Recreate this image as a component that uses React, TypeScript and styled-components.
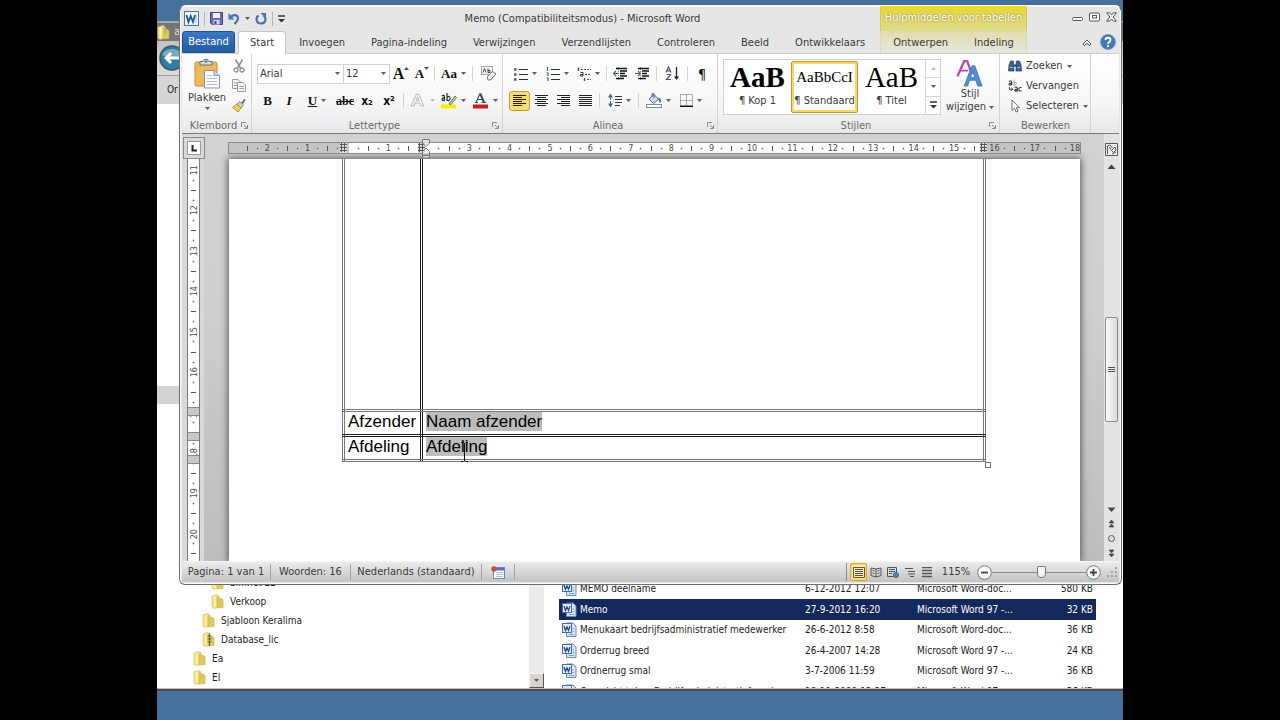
import React from "react";
import styled, { createGlobalStyle, css } from "styled-components";

const UI = `"DejaVu Sans Condensed", "DejaVu Sans", sans-serif`;

const Global = createGlobalStyle`
  * { box-sizing: border-box; }
  html, body { margin: 0; background: #000; }
  body { font: 11px/14px ${UI}; color: #3a3a3a; }
  button, select { font: inherit; color: inherit; }
  button { border: 0; padding: 0; margin: 0; background: none; }
  svg { display: block; flex: none; }
`;

/* ---------- desktop ---------- */

const Screen = styled.div`
  min-height: 100vh;
  padding: 0 157px;
  background: #000;
  display: flex;
`;

const Desktop = styled.main`
  position: relative;
  flex: 1;
  min-width: 0;
  background: #466f9b;
  padding: 21px 0 29px;
  display: flex;
  overflow: hidden;
`;

/* ---------- explorer window ---------- */

const Explorer = styled.section`
  flex: 1;
  min-width: 0;
  display: flex;
  flex-direction: column;
  background: #fff;
  border-bottom: 2px solid #4c4c4c;
  color: #1c1c1c;
  font-size: 10px;
`;

const ExplorerTitle = styled.div`
  height: 20px;
  display: flex;
  align-items: center;
  gap: 3px;
  background: #767676;
  border-top: 2px solid #a9a9a9;
  color: #ddd;
  font-size: 11px;
`;

const ExplorerNav = styled.div`
  height: 35px;
  display: flex;
  align-items: center;
  padding-left: 2px;
  background: linear-gradient(#bfc3c6, #dcdcdc);
  border-bottom: 1px solid #9b9b9b;
`;

const ExplorerCommands = styled.div`
  height: 28px;
  padding-left: 10px;
  display: flex;
  align-items: center;
  background: #d6d6d6;
`;

const ExplorerBody = styled.div`
  flex: 1 1 0;
  min-height: 0;
  display: flex;
  overflow: hidden;
  border-bottom: 1px solid #c0c0c0;
`;

const TreePane = styled.nav`
  width: 372px;
  overflow: hidden;
`;

const TreeFocus = styled.div`
  margin-top: 282px;
  height: 18px;
  background: #d4d3d2;
`;

const TreeList = styled.ul`
  list-style: none;
  margin: 169px 0 0;
  padding: 0;
`;

const TreeItem = styled.li<{ $depth: number }>`
  height: 19px;
  padding-left: ${(p) => 36 + p.$depth * 9}px;
  display: flex;
  align-items: center;
  gap: 5px;
`;

const TreeScroll = styled.div`
  width: 15px;
  display: flex;
  flex-direction: column;
  justify-content: flex-end;
  background: #ecebea;
`;

const TreeScrollButton = styled.button`
  height: 15px;
  display: flex;
  align-items: center;
  justify-content: center;
  background: #d6d3ce;
  border: 1px solid #f4f4f4;
  border-right-color: #555;
  border-bottom-color: #555;
`;

const FilePane = styled.div`
  flex: 1;
  padding: 475px 27px 0 15px;
  overflow: hidden;
`;

const FileTable = styled.table`
  width: 100%;
  table-layout: fixed;
  border-collapse: collapse;
`;

const FileRow = styled.tr<{ $selected?: boolean }>`
  height: 20px;
  &:nth-child(even) { height: 21px; }
  ${(p) => p.$selected && css`background: #14285c; color: #fff;`}
`;

const FileCell = styled.td<{ $w?: number; $end?: boolean }>`
  width: ${(p) => (p.$w ? p.$w + "px" : "auto")};
  padding: 0 3px 0 0;
  white-space: nowrap;
  text-align: ${(p) => (p.$end ? "right" : "left")};
`;

const FileName = styled.div`
  display: flex;
  align-items: center;
  gap: 3px;
  padding-left: 3px;
`;

/* ---------- Word window ---------- */

const WordWindow = styled.section`
  position: absolute;
  top: 5px;
  right: 1px;
  bottom: 135px;
  left: 22px;
  display: flex;
  flex-direction: column;
  padding: 0 2px 2px;
  background: #e6e6e6;
  border: 1px solid #6e6e6e;
  border-top-color: #f8f8f8;
  border-radius: 7px 7px 6px 6px;
  box-shadow: inset 0 0 0 1px #fafafa;
  overflow: hidden;
`;

const TitleBar = styled.header`
  height: 25px;
  display: flex;
  align-items: center;
`;

const QuickAccess = styled.div`
  height: 24px;
  display: flex;
  align-items: center;
  gap: 5px;
  padding-left: 2px;
`;

const QuickButton = styled.button`
  display: flex;
  align-items: center;
  gap: 5px;
`;

const QuickDivider = styled.span`
  width: 1px;
  height: 14px;
  background: #b5b5b5;
`;

const WindowTitle = styled.h1`
  flex: 1;
  margin: 0;
  text-align: center;
  font: inherit;
`;

const ContextTitle = styled.div`
  width: 147px;
  align-self: stretch;
  display: flex;
  align-items: center;
  justify-content: center;
  border: 1px solid #d9c94a;
  border-width: 0 1px;
  border-top: 3px solid #f2dc1e;
  background: linear-gradient(#e3d447, #dfdb8d);
  color: #fffff2;
  text-shadow: 0 0 2px #77702a;
  white-space: nowrap;
  line-height: 12px;
  padding-bottom: 4px;
`;

const WindowControls = styled.div`
  width: 92px;
  display: flex;
  justify-content: flex-end;
  align-items: center;
  gap: 6px;
  padding: 0 2px 4px 0;
`;

const TabRow = styled.div`
  height: 23px;
  display: flex;
  border-bottom: 1px solid #cfcfcf;
`;

const Tabs = styled.div`
  flex: 1;
  display: flex;
`;

const Tab = styled.button<{ $active?: boolean }>`
  flex: none;
  height: 23px;
  padding: 0 13px;
  white-space: nowrap;
  border-radius: 3px 3px 0 0;
  ${(p) =>
    p.$active &&
    css`
      background: #fff;
      border: 1px solid #c6c6c6;
      border-bottom: 0;
      padding: 0 11px;
    `}
`;

const FileTab = styled.button`
  height: 22px;
  width: 53px;
  margin-right: 3px;
  background: linear-gradient(#3b78c4, #2459a2);
  border: 1px solid #234f8c;
  border-radius: 3px 3px 0 0;
  color: #fff;
`;

const ContextTabs = styled.div`
  width: 147px;
  display: flex;
  justify-content: center;
  border: 1px solid #dcd9b6;
  border-width: 0 1px;
  background: linear-gradient(#e0deae, #e6e6e0);
`;

const TabExtras = styled.div`
  width: 92px;
  display: flex;
  align-items: center;
  justify-content: flex-end;
  gap: 8px;
  padding-right: 3px;
`;

const Ribbon = styled.div`
  height: 80px;
  display: flex;
  background: linear-gradient(#fff, #f7f7f7 60%, #e6e7e8);
  border-bottom: 1px solid #7c7c7c;
`;

const Group = styled.section<{ $w: number; $pad?: number }>`
  width: ${(p) => p.$w}px;
  padding: 2px 0 0 ${(p) => p.$pad ?? 4}px;
  display: flex;
  flex-direction: column;
  border-right: 1px solid #d3d3d3;
`;

const GroupBody = styled.div`
  flex: 1;
  min-height: 0;
  display: flex;
`;

const GroupFooter = styled.div`
  height: 15px;
  display: flex;
  align-items: center;
  padding: 0 3px 0 0;
  color: #6b6b6b;
`;

const GroupLabel = styled.span`
  flex: 1;
  text-align: center;
`;

const ToolRows = styled.div`
  flex: 1;
  display: flex;
  flex-direction: column;
  gap: 6px;
  padding-top: 7px;
`;

const ToolRow = styled.div`
  height: 21px;
  display: flex;
  align-items: center;
`;

const Tool = styled.button<{ $w: number; $active?: boolean }>`
  width: ${(p) => p.$w}px;
  height: 20px;
  display: flex;
  align-items: center;
  justify-content: center;
  gap: 4px;
  color: #111;
  ${(p) =>
    p.$active &&
    css`
      background: #fbdc78;
      border: 1px solid #c29b3a;
      border-radius: 3px;
    `}
`;

const SizeTool = styled(Tool)`
  gap: 0;
  svg { align-self: flex-start; margin-top: 3px; }
`;

const Glyph = styled.span<{ $size?: number; $serif?: boolean; $italic?: boolean; $under?: boolean; $strike?: boolean; $light?: boolean }>`
  font-family: ${(p) => (p.$serif ? `"Liberation Serif", serif` : UI)};
  font-weight: ${(p) => (p.$light ? "normal" : "bold")};
  font-size: ${(p) => p.$size ?? 13}px;
  line-height: 16px;
  font-style: ${(p) => (p.$italic ? "italic" : "normal")};
  text-decoration: ${(p) => (p.$under ? "underline" : p.$strike ? "line-through" : "none")};
`;

const Divider = styled.span`
  width: 1px;
  height: 15px;
  margin: 0 3px;
  background: #d2d2d2;
`;

const Combo = styled.label<{ $w: number }>`
  position: relative;
  width: ${(p) => p.$w}px;
  height: 20px;
  display: flex;
  align-items: center;
  border: 1px solid #d0d0d0;
  margin-right: -1px;
  background: #fff;

  select {
    width: 100%;
    height: 18px;
    padding: 0 2px;
    border: 0;
    background: none;
    appearance: none;
  }
  svg {
    position: absolute;
    right: 3px;
    pointer-events: none;
  }
`;

const PasteButton = styled.button`
  width: 42px;
  display: flex;
  flex-direction: column;
  align-items: center;
  gap: 2px;
  padding-top: 2px;
`;

const SmallStack = styled.div`
  width: 22px;
  display: flex;
  flex-direction: column;
  align-items: center;
  gap: 6px;
  padding-top: 3px;
`;

const Gallery = styled.div`
  width: 218px;
  height: 56px;
  margin-top: 3px;
  display: flex;
  background: #fff;
  border: 1px solid #cfcfcf;
`;

const StyleTile = styled.button<{ $active?: boolean }>`
  width: 67px;
  height: 52px;
  margin-top: 1px;
  display: flex;
  flex-direction: column;
  align-items: center;
  justify-content: flex-end;
  padding-bottom: 4px;
  border: 1px solid transparent;
  border-radius: 2px;
  overflow: hidden;
  white-space: nowrap;
  ${(p) =>
    p.$active &&
    css`
      border-color: #c0963a;
      box-shadow: inset 0 0 0 2px #f8d765;
    `}
`;

const Sample = styled.span<{ $size: number; $bold?: boolean }>`
  height: 32px;
  font: ${(p) => (p.$bold ? "bold" : "normal")} ${(p) => p.$size}px/30px "Liberation Serif", serif;
  color: #000;
`;

const GalleryScroll = styled.div`
  flex: 1;
  display: flex;
  flex-direction: column;
  border-left: 1px solid #d6d6d6;

  button {
    flex: 1;
    display: flex;
    flex-direction: column;
    gap: 2px;
    align-items: center;
    justify-content: center;
  }
  button + button { border-top: 1px solid #d6d6d6; }
`;

const ChangeStyles = styled.button`
  flex: 1;
  display: flex;
  flex-direction: column;
  align-items: center;
  gap: 1px;
  padding-top: 4px;
  line-height: 12px;
`;

const Inline = styled.span`
  display: flex;
  align-items: center;
  gap: 3px;
`;

const EditList = styled.div`
  display: flex;
  flex-direction: column;
  padding-left: 4px;
`;

const EditButton = styled.button`
  height: 20px;
  display: flex;
  align-items: center;
  gap: 4px;
`;

/* ---------- document area ---------- */

const Workspace = styled.div`
  flex: 1;
  min-height: 0;
  display: flex;
  background: linear-gradient(#d2d2d2, #cfcfcf 40%, #bdbdbd);
`;

const LeftRail = styled.div`
  width: 22px;
  display: flex;
  flex-direction: column;
  align-items: flex-start;
  background: #d9d9d9;
`;

const TabCorner = styled.button`
  width: 22px;
  height: 22px;
  margin: 3px 0 0 1px;
  display: flex;
  align-items: center;
  justify-content: center;
  border: 1px solid #8c8c8c;
  background: #d9d9d9;
`;

const VerticalRuler = styled.div`
  position: relative;
  flex: 1;
  width: 13px;
  margin-left: 5px;
  padding-top: 6px;
  display: grid;
  grid-template-rows: repeat(9, 1fr) 32px;
  background: #fff;
  border: 1px solid #7a7a7a;
  border-width: 0 1px;
  overflow: hidden;
`;

const VerticalCell = styled.div`
  display: grid;
  grid-template-rows: repeat(4, 10px);
  align-content: space-between;
  justify-items: center;
  align-items: center;
  min-height: 0;
  font-size: 9px;
  line-height: 10px;
  color: #4c4c4c;
`;

const Rotated = styled.span`
  writing-mode: vertical-rl;
  rotate: 180deg;
`;

const RowMarker = styled.span<{ $bottom: number }>`
  position: absolute;
  left: 0;
  right: 0;
  bottom: ${(p) => p.$bottom}px;
  height: 9px;
  background: #c9c9c9;
  border: 1px solid #8a8a8a;
  border-width: 1px 0;
`;

const PageColumn = styled.div`
  flex: 1;
  min-width: 0;
  display: flex;
  flex-direction: column;
  padding: 8px 24px 0 25px;
  overflow: hidden;
`;

const HorizontalRuler = styled.div`
  position: relative;
  height: 12px;
  margin: 0 -1px 5px;
  padding-left: 13px;
  display: grid;
  grid-template-columns: repeat(20, 1fr) 30px;
  background: linear-gradient(90deg, #c4c4c4 120px, #fff 120px, #fff calc(100% - 100px), #c4c4c4 calc(100% - 100px));
  border: 1px solid #8a8a8a;
`;

const HorizontalCell = styled.div`
  display: grid;
  grid-template-columns: repeat(4, 10px);
  justify-content: space-between;
  justify-items: center;
  align-items: center;
  font-size: 9px;
  line-height: 10px;
  color: #4c4c4c;
`;

const Tick = styled.i<{ $vertical?: boolean }>`
  width: ${(p) => (p.$vertical ? 5 : 1)}px;
  height: ${(p) => (p.$vertical ? 1 : 5)}px;
  background: #555;
`;

const Dot = styled.i`
  width: 1px;
  height: 1px;
  background: #444;
  outline: 1px solid #bbb5;
`;

const RulerMark = styled.span<{ $left?: number; $right?: number }>`
  position: absolute;
  top: 0;
  ${(p) => (p.$left !== undefined ? `left: ${p.$left}px;` : `right: ${p.$right}px;`)}
`;

const Page = styled.article`
  flex: 1;
  min-height: 0;
  padding: 0 94px 0 113px;
  background: #fff;
  box-shadow: 0 0 7px 1px #555;
`;

const TableFrame = styled.div`
  position: relative;
`;

const MemoTable = styled.table`
  width: 100%;
  table-layout: fixed;
  border-collapse: collapse;
  font: 17px/20px "Liberation Sans", Arial, sans-serif;
  color: #000;

  td { border: 3px double #222; }
  td:first-child { border-left-color: #777; }
  td:last-child { border-right-color: #777; }
  tr:first-child td { border-top: 0; border-bottom-color: #777; }
  tr:nth-child(2) td { border-top-color: #777; }
  tr:last-child td { border-bottom-color: #777; }
`;

const MemoRow = styled.tr<{ $h: number }>`
  height: ${(p) => p.$h}px;
`;

const MemoCell = styled.td<{ $w?: number }>`
  width: ${(p) => (p.$w ? p.$w + "px" : "auto")};
  padding: 0 3px 1px;
  vertical-align: middle;
`;

const FormField = styled.mark`
  background: #bcbcbc;
  color: #000;
`;

const TextCursor = styled.span`
  position: absolute;
  left: 118px;
  bottom: 0;
`;

const TableHandle = styled.span`
  position: absolute;
  right: -5px;
  bottom: -6px;
  width: 6px;
  height: 6px;
  border: 1px solid #777;
  background: #fff;
`;

const ScrollRail = styled.div`
  width: 15px;
  padding-top: 5px;
  display: flex;
  flex-direction: column;
  align-items: center;
  background: #e3e3e3;
`;

const RailButton = styled.button<{ $h: number }>`
  width: 15px;
  height: ${(p) => p.$h}px;
  display: flex;
  align-items: center;
  justify-content: center;
`;

const ScrollTrack = styled.div`
  flex: 1;
  padding-top: 144px;
`;

const ScrollThumb = styled.div`
  width: 13px;
  height: 105px;
  display: flex;
  align-items: center;
  justify-content: center;
  border: 1px solid #8c8c8c;
  border-radius: 2px;
  background: linear-gradient(90deg, #fafafa, #dcdcdc);
`;

/* ---------- status bar ---------- */

const StatusBar = styled.footer`
  height: 21px;
  display: flex;
  align-items: center;
  background: linear-gradient(#ececec, #c3c3c3);
  border-top: 1px solid #f7f7f7;
`;

const StatusItem = styled.button<{ $w: number }>`
  width: ${(p) => p.$w}px;
  height: 16px;
  display: flex;
  align-items: center;
  justify-content: center;
  white-space: nowrap;
  border-right: 1px solid #a3a3a3;
`;

const StatusSpacer = styled.span`
  flex: 1;
  height: 18px;
  border-right: 1px solid #8f8f8f;
  margin-right: 3px;
`;

const ViewButton = styled.button<{ $active?: boolean }>`
  width: 17px;
  height: 18px;
  display: flex;
  align-items: center;
  justify-content: center;
  ${(p) =>
    p.$active &&
    css`
      background: #fbe9a8;
      border: 1px solid #d9ab35;
      box-shadow: inset 0 0 0 1px #f6d565;
      border-radius: 2px;
    `}
`;

const ZoomLevel = styled.button`
  width: 42px;
  text-align: center;
`;

const ZoomSlider = styled.input`
  width: 94px;
  height: 16px;
  margin: 0;
  appearance: none;
  background: linear-gradient(#8d8d8d, #8d8d8d) center / 100% 1px no-repeat;

  &::-webkit-slider-thumb {
    appearance: none;
    width: 9px;
    height: 12px;
    background: #f6f6f6;
    border: 1px solid #777;
    border-radius: 1px 1px 4px 4px;
  }
`;

/* ---------- drawings ---------- */

const Caret = ({ up, faint }: { up?: boolean; faint?: boolean }) => (
  <svg width="5" height="3" viewBox="0 0 5 3">
    <path d={up ? "M0 3L2.500 0L5 3Z" : "M0 0H5L2.500 3Z"} fill={faint ? "#bbb" : "#5c5c5c"} />
  </svg>
);

const Folder = ({ zip }: { zip?: boolean }) => (
  <svg width="14" height="15" viewBox="0 0 14 15">
    <path d="M1 2L6 .5L8 2V13L3 14.500L1 13Z" fill="#f3e588" stroke="#d6c468" strokeWidth=".7" />
    <path d="M6 2.500L8 3.500V9L9 8.500V4L12 5.500V13.500L6 14Z" fill="#dfca5c" stroke="#c9b452" strokeWidth=".7" />
    <path d="M4 2V13" stroke="#fff9cf" />
    {zip && <path d="M7.500 1V14M5.500 4H9.500M5.500 7H9.500M5.500 10H9.500" stroke="#67613f" />}
  </svg>
);

const DocIcon = () => (
  <svg width="15" height="16" viewBox="0 0 15 16">
    <path d="M4.500 1H11L14 4V14.500H4.500Z" fill="#d6e4f4" stroke="#6c89b4" />
    <path d="M7 12.500H12M10.500 7H12M10.500 9.500H12" stroke="#7fa0cc" />
    <rect x=".5" y="1.500" width="9" height="9" fill="#e8f0fa" stroke="#4a6ca6" />
    <path d="M2 4L3.500 8.500L5 5L6.500 8.500L8 4" fill="none" stroke="#23498f" strokeWidth="1.300" />
  </svg>
);

const WordLogo = () => (
  <svg width="15" height="15" viewBox="0 0 15 15">
    <rect x=".5" y=".5" width="14" height="14" fill="#eef4fb" stroke="#4878ad" />
    <path d="M12 3V12" stroke="#9fb9d8" />
    <path d="M2.500 4L4.500 11L6.700 5L9 11L11 4" fill="none" stroke="#215a9f" strokeWidth="1.800" />
  </svg>
);

const SaveIcon = () => (
  <svg width="13" height="13" viewBox="0 0 13 13">
    <path d="M.5 .5H12.500V12.500H2L.5 11Z" fill="#6b6fb4" stroke="#40448a" />
    <rect x="3" y="1" width="7" height="5" fill="#eef0fa" />
    <rect x="3.500" y="8" width="6" height="4.500" fill="#d5d8ee" />
    <rect x="4.500" y="9" width="2" height="3" fill="#40448a" />
  </svg>
);

const UndoIcon = () => (
  <svg width="12" height="13" viewBox="0 0 12 13">
    <path d="M2.500 5.500C5 2 10 2.500 10 6.500C10 9 8 10.500 6.500 12" fill="none" stroke="#4674b4" strokeWidth="2.200" />
    <path d="M.5 1V7.500H6.500Z" fill="#4674b4" />
  </svg>
);

const RedoIcon = () => (
  <svg width="12" height="13" viewBox="0 0 12 13">
    <path d="M3.500 3.500C0 6 1.500 11.500 6 11.500C10.500 11.500 12 6.500 8.500 3.500" fill="none" stroke="#4674b4" strokeWidth="2.200" />
    <path d="M5.500 1H11V6.500Z" fill="#4674b4" />
  </svg>
);

const MoreIcon = () => (
  <svg width="7" height="8" viewBox="0 0 7 8">
    <path d="M0 1H7" stroke="#333" strokeWidth="1.300" />
    <path d="M0 4H7L3.500 7.500Z" fill="#333" />
  </svg>
);

const LauncherIcon = () => (
  <svg width="7" height="7" viewBox="0 0 7 7" fill="none" stroke="#8b8b8b">
    <path d="M.5 5V.5H5M3 3L6 6M6.500 3V6.500H3" />
  </svg>
);

const PasteIcon = () => (
  <svg width="27" height="31" viewBox="0 0 27 31">
    <rect x="1" y="4" width="22" height="24" rx="1.500" fill="#ecb95b" stroke="#c78f35" />
    <path d="M6 7V3.500H9C9 .5 15 .5 15 3.500H18V7Z" fill="#d9dde2" stroke="#64707e" />
    <rect x="10.500" y="2.500" width="3" height="2" fill="#64707e" />
    <path d="M10.500 12.500H20L25.500 17.500V30H10.500Z" fill="#f8fafd" stroke="#8294ad" />
    <path d="M20 12.500V17.500H25.500" fill="#cfdcec" stroke="#8294ad" />
    <path d="M13 17.500H18M13 20.500H23M13 23.500H23M13 26.500H23" stroke="#b4c0d0" />
  </svg>
);

const CutIcon = () => (
  <svg width="12" height="14" viewBox="0 0 12 14" fill="none" stroke="#8b9097">
    <path d="M2.500 .5L7.500 9M9.500 .5L4.500 9" strokeWidth="1.500" />
    <circle cx="3" cy="11" r="2" strokeWidth="1.300" />
    <circle cx="9" cy="11" r="2" strokeWidth="1.300" />
  </svg>
);

const CopyIcon = () => (
  <svg width="14" height="13" viewBox="0 0 14 13" fill="#f4f4f4" stroke="#9c9c9c">
    <path d="M.5 .5H6L8.500 3V9.500H.5Z" />
    <path d="M5.500 3.500H11L13.500 6V12.500H5.500Z" />
    <path d="M2 4H5M2 6.500H5M7.500 7.500H12M7.500 9.500H12" />
  </svg>
);

const PainterIcon = () => (
  <svg width="14" height="15" viewBox="0 0 14 15">
    <path d="M9 5L12.500 .8L13.500 2L10.500 6.500Z" fill="#59636f" />
    <path d="M5 6L8 3.500L11.500 7L9 10Z" fill="#c9d0d8" stroke="#6c7682" strokeWidth=".8" />
    <path d="M5 6L9 10L6 14L.5 9.500Z" fill="#e9cf52" stroke="#9f862b" strokeWidth=".8" />
  </svg>
);

const GrowIcon = ({ down }: { down?: boolean }) => (
  <svg width="5" height="4" viewBox="0 0 5 4">
    <path d={down ? "M0 0H5L2.500 3Z" : "M0 3H5L2.500 0Z"} fill="#3d5675" />
  </svg>
);

const ClearIcon = () => (
  <svg width="16" height="15" viewBox="0 0 16 15">
    <rect x=".5" y=".5" width="11" height="8" fill="#f5f5f5" stroke="#a0a6b0" />
    <path d="M2 6.500L3.500 2.500L5 6.500M7 2.500V6.500H9V4.500H7" fill="none" stroke="#333" strokeWidth=".9" />
    <path d="M6 11L11.500 5.500L15 8L9.500 14H7Z" fill="#eceef2" stroke="#6e7683" />
  </svg>
);

const ListIcon = ({ kind }: { kind: "bullet" | "number" | "multi" }) => (
  <svg width="14" height="14" viewBox="0 0 14 14">
    {kind === "multi" ? (
      <>
        <path d="M4 2.500H14M8 7.500H14M10 12.500H14" stroke="#4f5a68" strokeDasharray="2 1" />
        <path d="M1.500 .5V4M7.500 11V14" stroke="#2f4f7d" strokeWidth="1.400" />
        <path d="M3.500 5.500H6V9H3.500V7.500H6" fill="none" stroke="#333" />
      </>
    ) : (
      <>
        <path d="M5 2.500H14M5 7.500H14M5 12.500H14" stroke="#2d2d2d" />
        <path
          d={kind === "bullet" ? "M0 2.500H2.500M0 7.500H2.500M0 12.500H2.500" : "M1.500 0V4M.5 6H2V9M.5 11H2V14"}
          stroke="#3f5f8e"
          strokeWidth={kind === "bullet" ? 2.5 : 1.2}
          fill="none"
        />
      </>
    )}
  </svg>
);

const IndentIcon = ({ out }: { out?: boolean }) => (
  <svg width="15" height="13" viewBox="0 0 15 13">
    <path d="M3 1.500H14M7 4H14M7 6.500H12M7 9H14M3 11.500H11" stroke="#111" strokeWidth="1.300" />
    <path d={out ? "M5.500 6.500H1M3 4L.5 6.500L3 9" : "M0 6.500H5M3 4L5.500 6.500L3 9"} fill="none" stroke="#3f5f8e" strokeWidth="1.200" />
    <path d="M5.500 0V13" stroke="#777" strokeDasharray="1 1" />
  </svg>
);

const SortIcon = () => (
  <svg width="15" height="15" viewBox="0 0 15 15" fill="none">
    <path d="M1 6.500L3.500 1L6 6.500M2 4.800H5" stroke="#4b5563" strokeWidth="1.200" />
    <path d="M1.500 8.500H5.500L1.500 13.500H6" stroke="#4b5563" strokeWidth="1.200" />
    <path d="M11.500 1V12" stroke="#222" strokeWidth="1.300" />
    <path d="M9 10.500H14L11.500 14Z" fill="#222" />
  </svg>
);

const AlignIcon = ({ kind }: { kind: "left" | "center" | "right" | "full" }) => {
  const short = { left: [0, 9], center: [2, 11], right: [4, 13], full: [0, 13] }[kind];
  return (
    <svg width="13" height="11" viewBox="0 0 13 11">
      {[0, 1, 2, 3, 4, 5].map((i) => {
        const [a, b] = i % 2 ? short : [0, 13];
        return <path key={i} d={`M${a} ${i * 2 + 0.5}H${b}`} stroke="#222" />;
      })}
    </svg>
  );
};

const SpacingIcon = () => (
  <svg width="14" height="15" viewBox="0 0 14 15">
    <path d="M2.500 2V13" stroke="#3f6694" strokeDasharray="5 1" />
    <path d="M0 4.500L2.500 .5L5 4.500ZM0 10.500L2.500 14.500L5 10.500Z" fill="#3f6694" />
    <path d="M7 3.500H14M7 6.500H14M7 9.500H14M7 12.500H12" stroke="#333" />
  </svg>
);

const BucketIcon = () => (
  <svg width="16" height="15" viewBox="0 0 16 15">
    <path d="M3 6L8 1.500L12.500 6.500L7.500 10.500Z" fill="#cfdbe9" stroke="#51657e" />
    <path d="M6 4V1C6 0 8 0 8 1V5" fill="none" stroke="#51657e" />
    <path d="M12.500 4.500C15 5 15.500 8 14.500 10C12.800 9 12.500 7 12.500 4.500Z" fill="#3f6fb0" />
    <rect x=".5" y="11.500" width="15" height="3" fill="#fff" stroke="#888" />
  </svg>
);

const BordersIcon = () => (
  <svg width="13" height="13" viewBox="0 0 13 13" fill="none">
    <path d="M.5 .5H12.500M.5 6.500H12.500M.5 .5V11M6.500 .5V11M12.500 .5V11" stroke="#666" strokeDasharray="1 1" />
    <path d="M0 12.300H13" stroke="#111" strokeWidth="1.400" />
  </svg>
);

const ColorGlyph = ({ kind }: { kind: "effect" | "marker" | "font" }) => (
  <svg width="17" height="17" viewBox="0 0 17 17" fill="none">
    {kind === "effect" && (
      <path d="M2 14L7.500 2H9.500L15 14H12L10.800 11H6L5 14ZM7 8.500H10L8.500 5Z" fill="#f2f2f2" stroke="#b9b9b9" />
    )}
    {kind === "marker" && (
      <>
        <rect x="1" y="12.500" width="15" height="4" fill="#f6f000" />
        <path d="M2 4C3 3 4.500 3 4.500 5V9M4.500 6C2 5.500 1 8.500 3 8.500C4 8.500 4.500 7.500 4.500 6.500M7 1V9M7 5.500C8 3.500 10 4.500 10 6.500C10 8.500 8 9.500 7 7.500" stroke="#222" strokeWidth="1.100" />
        <path d="M9 12L15 4L16.500 5.500L11 12.500Z" fill="#cfd6a8" stroke="#53602f" strokeWidth=".8" />
      </>
    )}
    {kind === "font" && (
      <>
        <rect x="1" y="12.500" width="15" height="4" fill="#c4201f" />
        <path d="M4 10.500L8 1.500M5.500 7.500H11M3 10.500H6M9.500 10.500H14" stroke="#34496b" strokeWidth="1.100" />
        <path d="M8.200 1.500L12 10.500" stroke="#34496b" strokeWidth="2" />
      </>
    )}
  </svg>
);

const StylesIcon = () => (
  <svg width="28" height="27" viewBox="0 0 28 28">
    <path d="M1 17L8 1H11L16 15" fill="none" stroke="#b04fa6" strokeWidth="2.400" />
    <path d="M3.500 11H12" stroke="#b04fa6" strokeWidth="2" />
    <path d="M8 27L16 6H19L26.500 27H22L20 21H13.500L11.500 27ZM14.500 18H19L16.800 11.500Z" fill="#4f8fd3" stroke="#3a6fae" strokeWidth=".8" />
  </svg>
);

const FindIcon = () => (
  <svg width="14" height="12" viewBox="0 0 14 12">
    <path d="M2.500 1H5.500V4L6 11H.5L1 5ZM8.500 1H11.500L13 5L13.500 11H8V4Z" fill="#3e5f8d" stroke="#26405f" strokeWidth=".7" />
    <path d="M5.500 5.500H8.500" stroke="#26405f" strokeWidth="2" />
    <path d="M2 7.500H4.500M9.500 7.500H12" stroke="#b9cfe8" />
  </svg>
);

const ReplaceIcon = () => (
  <svg width="14" height="14" viewBox="0 0 15 14" fill="none">
    <path d="M1 2C3 1 4 2 4 3V6M4 4C1 3.500 .5 6 2 6C3 6 4 5 4 4" stroke="#333" strokeWidth="1.200" />
    <path d="M6.500 0V6M6.500 3.500C8 2 9 3.500 9 4.500C9 6 7 6.500 6.500 5.500" stroke="#999" />
    <path d="M1.500 8V10.500H5M3.500 9L5.200 10.500L3.500 12" stroke="#333" />
    <path d="M7 8.500C9 7.500 10 8.500 10 9.500V13M10 10.500C7 10 6.500 12.500 8 12.500C9 12.500 10 11.500 10 10.500M14.500 9C12.500 8 11.500 9.500 11.500 10.500C11.500 12 13 13 14.500 12" stroke="#333" strokeWidth="1.200" />
  </svg>
);

const PointerIcon = () => (
  <svg width="14" height="14" viewBox="0 0 14 14">
    <path d="M4 1V11.500L6.500 9.200L8.200 13L10 12.200L8.300 8.700H11.500Z" fill="#fff" stroke="#66707c" />
  </svg>
);

const HelpIcon = () => (
  <svg width="16" height="16" viewBox="0 0 16 16">
    <circle cx="8" cy="8" r="7.500" fill="#4279bd" stroke="#7b98bd" />
    <path d="M5.500 6C5.500 3 10.500 3 10.500 6C10.500 8 8 8 8 10" fill="none" stroke="#fff" strokeWidth="1.800" />
    <circle cx="8" cy="12.200" r="1.100" fill="#fff" />
  </svg>
);

const WindowGlyph = ({ kind }: { kind: "min" | "max" | "close" }) => (
  <svg width="11" height="10" viewBox="0 0 11 10" fill="#fff" stroke="#555">
    {kind === "min" && <rect x=".5" y="5.500" width="10" height="3" rx="1" />}
    {kind === "max" && (
      <>
        <rect x=".5" y="1" width="10" height="8" rx="1" />
        <rect x="3.500" y="3.500" width="4" height="2.500" />
      </>
    )}
    {kind === "close" && <path d="M.7 .8H3.500L5.500 3L7.500 .8H10.300L7.200 5L10.300 9.200H7.500L5.500 7L3.500 9.200H.7L3.800 5Z" />}
  </svg>
);

const ColumnMark = () => (
  <svg width="7" height="10" viewBox="0 0 7 10">
    <rect width="7" height="10" fill="#ddd" />
    <path d="M0 1.500H7M0 4.500H7M0 7.500H7M1.500 0V9M4.500 0V9" stroke="#555" />
  </svg>
);

const IndentMark = () => (
  <svg width="9" height="22" viewBox="0 0 9 22" fill="#eee" stroke="#777" overflow="visible">
    <path d="M.5 -3.500H7.500V0L4 3.500L.5 0ZM.5 12V8.500L4 5L7.500 8.500V12ZM.5 12.500H7.500V15H.5Z" fillOpacity=".7" />
  </svg>
);

const ViewIcon = ({ kind }: { kind: number }) => (
  <svg width="12" height="11" viewBox="0 0 12 11" fill="none" stroke="#555">
    {kind === 0 && <path d="M.5 .5H11.500V10.500H.5ZM2 2.500H10M2 4.500H10M2 6.500H10M2 8.500H10" />}
    {kind === 1 && <path d="M6 2V10M6 2L1 1V8.500L6 10L11 8.500V1ZM2.500 3.500L4.500 4M2.500 6L4.500 6.500M7.500 4L9.500 3.500M7.500 6.500L9.500 6" />}
    {kind === 2 && (
      <>
        <path d="M.5 .5H9.500V9.500H.5ZM2 2.500H8M2 4.500H8M2 6.500H5" />
        <circle cx="9" cy="8" r="2.500" fill="#5d86a8" stroke="#44657f" />
      </>
    )}
    {kind === 3 && <path d="M1 1.500H9M4 4.500H11M4 7H11M6 9.500H10" />}
    {kind === 4 && <path d="M1 .5H11M1 3.500H11M1 6.500H11M1 9.500H11" strokeWidth="1.500" />}
  </svg>
);

const ZoomGlyph = ({ plus }: { plus?: boolean }) => (
  <svg width="15" height="15" viewBox="0 0 15 15">
    <circle cx="7.500" cy="7.500" r="6.800" fill="#f8f8f8" stroke="#777" />
    <path d={plus ? "M4 7.500H11M7.500 4V11" : "M4 7.500H11"} stroke="#444" strokeWidth="1.800" />
  </svg>
);

const MacroIcon = () => (
  <svg width="14" height="13" viewBox="0 0 14 13">
    <rect x="2.500" y="1.500" width="11" height="11" fill="#fff" stroke="#7286a6" />
    <rect x="3" y="2" width="10" height="2.500" fill="#4a78c0" />
    <path d="M5 6.500H12M5 8.500H12M5 10.500H12" stroke="#b3c2d8" />
    <circle cx="3" cy="3" r="2.700" fill="#cc4a42" />
  </svg>
);

const BackIcon = () => (
  <svg width="26" height="26" viewBox="0 0 26 26">
    <circle cx="13" cy="13" r="12" fill="#2b7fa0" stroke="#44525c" strokeWidth="1.500" />
    <path d="M3 10C6 2 20 2 23 10C17 13 9 13 3 10Z" fill="#78a9bd" />
    <path d="M5 13L11 7L13 9L11 11.500H21V14.500H11L13 17L11 19Z" fill="#fff" />
  </svg>
);

const RailGlyph = ({ kind }: { kind: "up" | "down" | "prev" | "browse" | "next" | "rulers" | "grip" }) => (
  <svg width="13" height="13" viewBox="0 0 13 13" fill="none" stroke="#555">
    {kind === "up" && <path d="M2.500 9H10.500L6.500 4.500Z" fill="#444" stroke="none" />}
    {kind === "down" && <path d="M2.500 4.500H10.500L6.500 9Z" fill="#444" stroke="none" />}
    {kind === "prev" && <path d="M4 6H9L6.500 3ZM4 10H9L6.500 7Z" fill="#444" stroke="#444" strokeWidth=".6" />}
    {kind === "next" && <path d="M4 3H9L6.500 6ZM4 7H9L6.500 10Z" fill="#444" stroke="#444" strokeWidth=".6" />}
    {kind === "browse" && <circle cx="6.500" cy="6.500" r="3" fill="#ddd" />}
    {kind === "rulers" && (
      <>
        <path d="M.5 .5H12.500V12.500H.5Z" fill="#eee" />
        <path d="M2.500 11V3L5 2L7.500 5M4.500 4L6 7M6.500 7.500L10 4L11 7L8.500 9.500ZM7 11L11 9" />
      </>
    )}
    {kind === "grip" && <path d="M3 4.500H10M3 6.500H10M3 8.500H10" />}
  </svg>
);

/* ---------- data ---------- */

const tree = [
  { name: "Simnet 22", depth: 2 },
  { name: "Verkoop", depth: 2 },
  { name: "Sjabloon Keralima", depth: 1 },
  { name: "Database_lic", depth: 1, zip: true },
  { name: "Ea", depth: 0 },
  { name: "El", depth: 0 },
  { name: "", depth: 0 },
];

const files = [
  ["MEMO deelname", "6-12-2012 12:07", "Microsoft Word-doc...", "580 KB"],
  ["Memo", "27-9-2012 16:20", "Microsoft Word 97 -...", "32 KB"],
  ["Menukaart bedrijfsadministratief medewerker", "26-6-2012 8:58", "Microsoft Word-doc...", "36 KB"],
  ["Orderrug breed", "26-4-2007 14:28", "Microsoft Word 97 -...", "24 KB"],
  ["Ordnerrug smal", "3-7-2006 11:59", "Microsoft Word 97 -...", "36 KB"],
  ["Overzicht taken Bedrijfsadministratief mede", "18-11-2009 12:27", "Microsoft Word 97 -...", "36 KB"],
];

const tabs = ["Invoegen", "Pagina-indeling", "Verwijzingen", "Verzendlijsten", "Controleren", "Beeld", "Ontwikkelaars"];

const rulerNumbers = ["2", "1", "", ...Array.from({ length: 18 }, (_, i) => (i === 1 ? "" : String(i + 1)))];
const verticalNumbers = ["11", "12", "13", "14", "15", "16", "17", "18", "19", "20"];

const Footer = ({ label, plain }: { label: string; plain?: boolean }) => (
  <GroupFooter>
    <GroupLabel>{label}</GroupLabel>
    {!plain && <button aria-label={`${label} opties`}><LauncherIcon /></button>}
  </GroupFooter>
);

/* ---------- views ---------- */

const ExplorerView = () => (
  <Explorer>
    <ExplorerTitle><Folder />a</ExplorerTitle>
    <ExplorerNav><button aria-label="Terug"><BackIcon /></button></ExplorerNav>
    <ExplorerCommands>Or</ExplorerCommands>
    <ExplorerBody>
      <TreePane>
        <TreeFocus />
        <TreeList>
          {tree.map((n) => (
            <TreeItem key={n.name} $depth={n.depth}><Folder zip={n.zip} />{n.name}</TreeItem>
          ))}
        </TreeList>
      </TreePane>
      <TreeScroll>
        <TreeScrollButton aria-label="Omlaag"><Caret /></TreeScrollButton>
      </TreeScroll>
      <FilePane>
        <FileTable>
          <tbody>
            {files.map(([name, date, type, size]) => (
              <FileRow key={name} $selected={name === "Memo"}>
                <FileCell><FileName><DocIcon />{name}</FileName></FileCell>
                <FileCell $w={112}>{date}</FileCell>
                <FileCell $w={125}>{type}</FileCell>
                <FileCell $w={54} $end>{size}</FileCell>
              </FileRow>
            ))}
          </tbody>
        </FileTable>
      </FilePane>
    </ExplorerBody>
  </Explorer>
);

const ClipboardGroup = () => (
  <Group $w={70}>
    <GroupBody>
      <PasteButton><PasteIcon />Plakken<Caret /></PasteButton>
      <SmallStack>
        <button aria-label="Knippen"><CutIcon /></button>
        <button aria-label="Kopiëren"><CopyIcon /></button>
        <button aria-label="Opmaak kopiëren"><PainterIcon /></button>
      </SmallStack>
    </GroupBody>
    <Footer label="Klembord" />
  </Group>
);

const FontGroup = () => (
  <Group $w={251} $pad={5}>
    <ToolRows>
      <ToolRow>
        <Combo $w={87}><select aria-label="Lettertype"><option>Arial</option></select><Caret /></Combo>
        <Combo $w={47}><select aria-label="Tekengrootte"><option>12</option></select><Caret /></Combo>
        <SizeTool $w={24} aria-label="Groter"><Glyph $serif $size={16}>A</Glyph><GrowIcon /></SizeTool>
        <SizeTool $w={18} aria-label="Kleiner"><Glyph $serif>A</Glyph><GrowIcon down /></SizeTool>
        <Divider />
        <Tool $w={31}><Glyph $serif>Aa</Glyph><Caret /></Tool>
        <Divider />
        <Tool $w={26} aria-label="Opmaak wissen"><ClearIcon /></Tool>
      </ToolRow>
      <ToolRow>
        <Tool $w={21}><Glyph $serif>B</Glyph></Tool>
        <Tool $w={22}><Glyph $serif $italic>I</Glyph></Tool>
        <Tool $w={34}><Glyph $serif $under>U</Glyph><Caret /></Tool>
        <Tool $w={22}><Glyph $serif $size={12} $strike>abc</Glyph></Tool>
        <Tool $w={22}><Glyph $size={12}>x₂</Glyph></Tool>
        <Tool $w={22}><Glyph $size={12}>x²</Glyph></Tool>
        <Divider />
        <Tool $w={30} aria-label="Teksteffecten"><ColorGlyph kind="effect" /><Caret faint /></Tool>
        <Tool $w={32} aria-label="Markeren"><ColorGlyph kind="marker" /><Caret /></Tool>
        <Tool $w={32} aria-label="Tekstkleur"><ColorGlyph kind="font" /><Caret /></Tool>
      </ToolRow>
    </ToolRows>
    <Footer label="Lettertype" />
  </Group>
);

const ParagraphGroup = () => (
  <Group $w={215} $pad={6}>
    <ToolRows>
      <ToolRow>
        <Tool $w={32} aria-label="Opsommingstekens"><ListIcon kind="bullet" /><Caret /></Tool>
        <Tool $w={33} aria-label="Nummering"><ListIcon kind="number" /><Caret /></Tool>
        <Tool $w={29} aria-label="Lijst met meerdere niveaus"><ListIcon kind="multi" /><Caret /></Tool>
        <Divider />
        <Tool $w={21} aria-label="Inspringing verkleinen"><IndentIcon out /></Tool>
        <Tool $w={22} aria-label="Inspringing vergroten"><IndentIcon /></Tool>
        <Divider />
        <Tool $w={24} aria-label="Sorteren"><SortIcon /></Tool>
        <Divider />
        <Tool $w={22}><Glyph $size={14} $light>¶</Glyph></Tool>
      </ToolRow>
      <ToolRow>
        <Tool $w={21} $active aria-label="Links uitlijnen"><AlignIcon kind="left" /></Tool>
        <Tool $w={22} aria-label="Centreren"><AlignIcon kind="center" /></Tool>
        <Tool $w={22} aria-label="Rechts uitlijnen"><AlignIcon kind="right" /></Tool>
        <Tool $w={22} aria-label="Uitvullen"><AlignIcon kind="full" /></Tool>
        <Divider />
        <Tool $w={32} aria-label="Regelafstand"><SpacingIcon /><Caret /></Tool>
        <Divider />
        <Tool $w={33} aria-label="Arcering"><BucketIcon /><Caret /></Tool>
        <Tool $w={32} aria-label="Randen"><BordersIcon /><Caret /></Tool>
      </ToolRow>
    </ToolRows>
    <Footer label="Alinea" />
  </Group>
);

const StylesGroup = () => (
  <Group $w={282} $pad={5}>
    <GroupBody>
      <Gallery>
        <StyleTile><Sample $size={29} $bold>AaB</Sample>¶ Kop 1</StyleTile>
        <StyleTile $active><Sample $size={15}>AaBbCcI</Sample>¶ Standaard</StyleTile>
        <StyleTile><Sample $size={29}>AaB</Sample>¶ Titel</StyleTile>
        <GalleryScroll>
          <button aria-label="Vorige rij"><Caret up faint /></button>
          <button aria-label="Volgende rij"><Caret /></button>
          <button aria-label="Meer stijlen"><MoreIcon /></button>
        </GalleryScroll>
      </Gallery>
      <ChangeStyles>
        <StylesIcon />
        <span>Stijl</span>
        <Inline>wijzigen<Caret /></Inline>
      </ChangeStyles>
    </GroupBody>
    <Footer label="Stijlen" />
  </Group>
);

const EditingGroup = () => (
  <Group $w={91}>
    <GroupBody>
      <EditList>
        <EditButton><FindIcon />Zoeken<Caret /></EditButton>
        <EditButton><ReplaceIcon />Vervangen</EditButton>
        <EditButton><PointerIcon />Selecteren<Caret /></EditButton>
      </EditList>
    </GroupBody>
    <Footer label="Bewerken" plain />
  </Group>
);

const DocumentArea = () => (
  <Workspace>
    <LeftRail>
      <TabCorner aria-label="Tabtype">
        <svg width="14" height="14" viewBox="0 0 14 14">
          <rect x=".5" y=".5" width="13" height="13" fill="#fff" stroke="#999" />
          <path d="M5.500 4V9.500H10" fill="none" stroke="#222" strokeWidth="2" />
        </svg>
      </TabCorner>
      <VerticalRuler>
        {verticalNumbers.map((n) => (
          <VerticalCell key={n}><Rotated>{n}</Rotated><Dot /><Tick $vertical /><Dot /></VerticalCell>
        ))}
        <RowMarker $bottom={145} />
        <RowMarker $bottom={120} />
        <RowMarker $bottom={97} />
      </VerticalRuler>
    </LeftRail>
    <PageColumn>
      <HorizontalRuler>
        {rulerNumbers.map((n, i) => (
          <HorizontalCell key={i}><Tick /><Dot /><span>{n}</span>{n !== "18" && <Dot />}</HorizontalCell>
        ))}
        <RulerMark $left={111}><ColumnMark /></RulerMark>
        <RulerMark $left={189}><ColumnMark /></RulerMark>
        <RulerMark $left={193}><IndentMark /></RulerMark>
        <RulerMark $right={93}><ColumnMark /></RulerMark>
      </HorizontalRuler>
      <Page>
        <TableFrame>
          <MemoTable>
            <tbody>
              <MemoRow $h={251}><MemoCell $w={78} /><MemoCell /></MemoRow>
              <MemoRow $h={25}><MemoCell>Afzender</MemoCell><MemoCell><FormField>Naam afzender</FormField></MemoCell></MemoRow>
              <MemoRow $h={25}><MemoCell>Afdeling</MemoCell><MemoCell><FormField>Afdeling</FormField></MemoCell></MemoRow>
            </tbody>
          </MemoTable>
          <TextCursor>
            <svg width="9" height="20" viewBox="0 0 9 20" fill="none" stroke="#111">
              <path d="M1 .5H3.500M5.500 .5H8M4.500 1V19M1 19.500H3.500M5.500 19.500H8" />
            </svg>
          </TextCursor>
          <TableHandle />
        </TableFrame>
      </Page>
    </PageColumn>
    <ScrollRail>
      <RailButton $h={20} aria-label="Liniaal"><RailGlyph kind="rulers" /></RailButton>
      <RailButton $h={14} aria-label="Omhoog"><RailGlyph kind="up" /></RailButton>
      <ScrollTrack><ScrollThumb><RailGlyph kind="grip" /></ScrollThumb></ScrollTrack>
      <RailButton $h={14} aria-label="Omlaag"><RailGlyph kind="down" /></RailButton>
      <RailButton $h={15} aria-label="Vorige pagina"><RailGlyph kind="prev" /></RailButton>
      <RailButton $h={15} aria-label="Bladeren"><RailGlyph kind="browse" /></RailButton>
      <RailButton $h={15} aria-label="Volgende pagina"><RailGlyph kind="next" /></RailButton>
    </ScrollRail>
  </Workspace>
);

const StatusView = () => (
  <StatusBar>
    <StatusItem $w={89}>Pagina: 1 van 1</StatusItem>
    <StatusItem $w={80}>Woorden: 16</StatusItem>
    <StatusItem $w={131}>Nederlands (standaard)</StatusItem>
    <StatusItem $w={33} aria-label="Macro opnemen"><MacroIcon /></StatusItem>
    <StatusSpacer />
    {[0, 1, 2, 3, 4].map((k) => (
      <ViewButton key={k} $active={k === 0} aria-label={`Weergave ${k + 1}`}><ViewIcon kind={k} /></ViewButton>
    ))}
    <ZoomLevel>115%</ZoomLevel>
    <button aria-label="Uitzoomen"><ZoomGlyph /></button>
    <ZoomSlider type="range" aria-label="Zoomen" min={0} max={100} defaultValue={53} />
    <button aria-label="Inzoomen"><ZoomGlyph plus /></button>
    <svg width="18" height="14" viewBox="0 0 18 14">
      <path d="M14 3H16M10 7H12M14 7H16M6 11H8M10 11H12M14 11H16" stroke="#a2a2a2" strokeWidth="2" />
    </svg>
  </StatusBar>
);

export default function App() {
  return (
    <Screen>
      <Global />
      <Desktop>
        <ExplorerView />
        <WordWindow>
          <TitleBar>
            <QuickAccess>
              <WordLogo />
              <QuickDivider />
              <QuickButton aria-label="Opslaan"><SaveIcon /></QuickButton>
              <QuickButton aria-label="Ongedaan maken"><UndoIcon /><Caret /></QuickButton>
              <QuickButton aria-label="Opnieuw"><RedoIcon /></QuickButton>
              <QuickDivider />
              <QuickButton aria-label="Werkbalk aanpassen"><MoreIcon /></QuickButton>
            </QuickAccess>
            <WindowTitle>Memo (Compatibiliteitsmodus) - Microsoft Word</WindowTitle>
            <ContextTitle>Hulpmiddelen voor tabellen</ContextTitle>
            <WindowControls>
              <button aria-label="Minimaliseren"><WindowGlyph kind="min" /></button>
              <button aria-label="Maximaliseren"><WindowGlyph kind="max" /></button>
              <button aria-label="Sluiten"><WindowGlyph kind="close" /></button>
            </WindowControls>
          </TitleBar>
          <TabRow>
            <Tabs>
              <FileTab>Bestand</FileTab>
              <Tab $active>Start</Tab>
              {tabs.map((t) => <Tab key={t}>{t}</Tab>)}
            </Tabs>
            <ContextTabs><Tab>Ontwerpen</Tab><Tab>Indeling</Tab></ContextTabs>
            <TabExtras>
              <button aria-label="Lint minimaliseren">
                <svg width="10" height="7" viewBox="0 0 10 7">
                  <path d="M1 5L5 1L9 5L8 6.500L5 4.500L2 6.500Z" fill="#fff" stroke="#555" />
                </svg>
              </button>
              <button aria-label="Help"><HelpIcon /></button>
            </TabExtras>
          </TabRow>
          <Ribbon>
            <ClipboardGroup />
            <FontGroup />
            <ParagraphGroup />
            <StylesGroup />
            <EditingGroup />
          </Ribbon>
          <DocumentArea />
          <StatusView />
        </WordWindow>
      </Desktop>
    </Screen>
  );
}
